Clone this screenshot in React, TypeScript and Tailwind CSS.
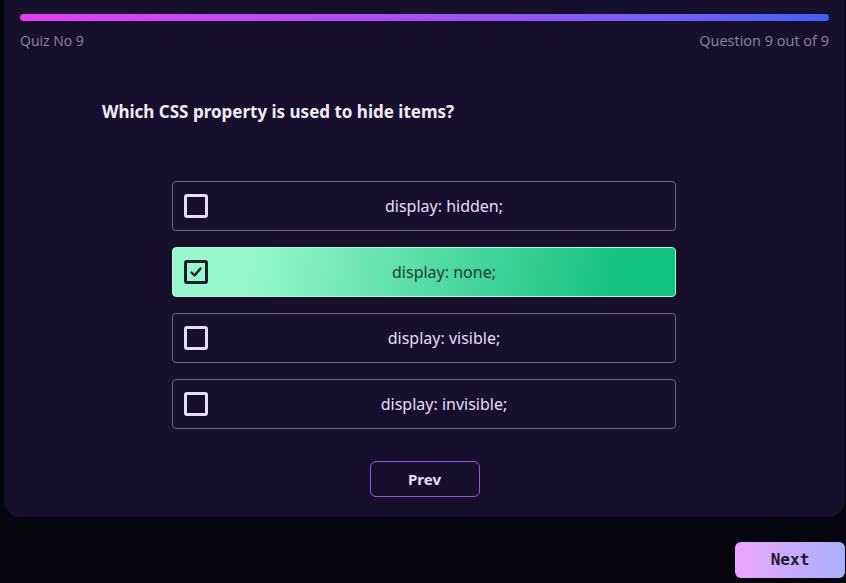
import React, { useState } from 'react';

const options = ['display: hidden;', 'display: none;', 'display: visible;', 'display: invisible;'];

function CheckBox({ checked }: { checked: boolean }) {
  if (checked) {
    return (
      <div className="w-6 h-6 rounded-[3px] border-[3px] border-[#1b1e2a] flex items-center justify-center shrink-0">
        <svg width="14" height="14" viewBox="0 0 14 14" fill="none">
          <path d="M2.5 7.5 L5.5 10.5 L11.5 3.5" stroke="#1b1e2a" strokeWidth="2.4" strokeLinecap="round" strokeLinejoin="round" />
        </svg>
      </div>
    );
  }
  return <div className="w-6 h-6 rounded-[3px] border-[3px] border-[#e8dcfb] shrink-0" />;
}

export default function App() {
  const [selected, setSelected] = useState(1);

  return (
    <div className="w-[846px] h-[583px] bg-[#05050f] overflow-hidden font-['Open_Sans',sans-serif]">
      <div className="mx-[4px] mr-[1px] -mt-4 pt-[30px] pb-5 bg-[#16102c] rounded-2xl">
        <div className="px-4">
          <div className="h-[7px] rounded-full bg-gradient-to-r from-[#e23ef2] via-[#a84ff4] to-[#3f62f8]" />
          <div className="flex justify-between mt-[9px] text-[14px] text-[#8c879e]">
            <span>Quiz No 9</span>
            <span className="text-[14.5px]">Question 9 out of 9</span>
          </div>
        </div>

        <h2 className="ml-[98px] mt-[47px] text-[17px] font-bold text-[#f2eef8] font-['Noto_Sans',sans-serif]">
          Which CSS property is used to hide items?
        </h2>

        <div className="flex flex-col gap-4 w-[504px] ml-[168px] mt-[57px]">
          {options.map((opt, i) => {
            const isSel = i === selected;
            return (
              <button
                key={opt}
                onClick={() => setSelected(i)}
                className={
                  isSel
                    ? 'h-[50px] flex items-center px-[11px] rounded-[4px] border border-[#b9f5da] bg-[linear-gradient(100deg,#97f8cb_15%,#44d59c_60%,#12c07f_90%)] text-[#1e3a33]'
                    : 'h-[50px] flex items-center px-[11px] rounded-[4px] border border-[#6c6683] text-[#e8def8]'
                }
              >
                <CheckBox checked={isSel} />
                <span className="flex-1 pl-4 text-center text-[16px] font-['Noto_Sans',sans-serif]">{opt}</span>
              </button>
            );
          })}
        </div>

        <div className="flex justify-center mt-8">
          <button className="w-[110px] h-9 rounded-md border border-[#9856ee] text-[#ecdff9] font-bold text-[15px] font-['Noto_Sans',sans-serif]">
            Prev
          </button>
        </div>
      </div>

      <div className="flex justify-end mt-[25px] mr-[1px]">
        <button className="w-[110px] h-9 rounded-md bg-gradient-to-r from-[#eba5fb] to-[#a8b0fd] text-[#1f1b2e] font-bold text-[16px] font-['DejaVu_Sans_Mono',monospace]">
          Next
        </button>
      </div>
    </div>
  );
}
